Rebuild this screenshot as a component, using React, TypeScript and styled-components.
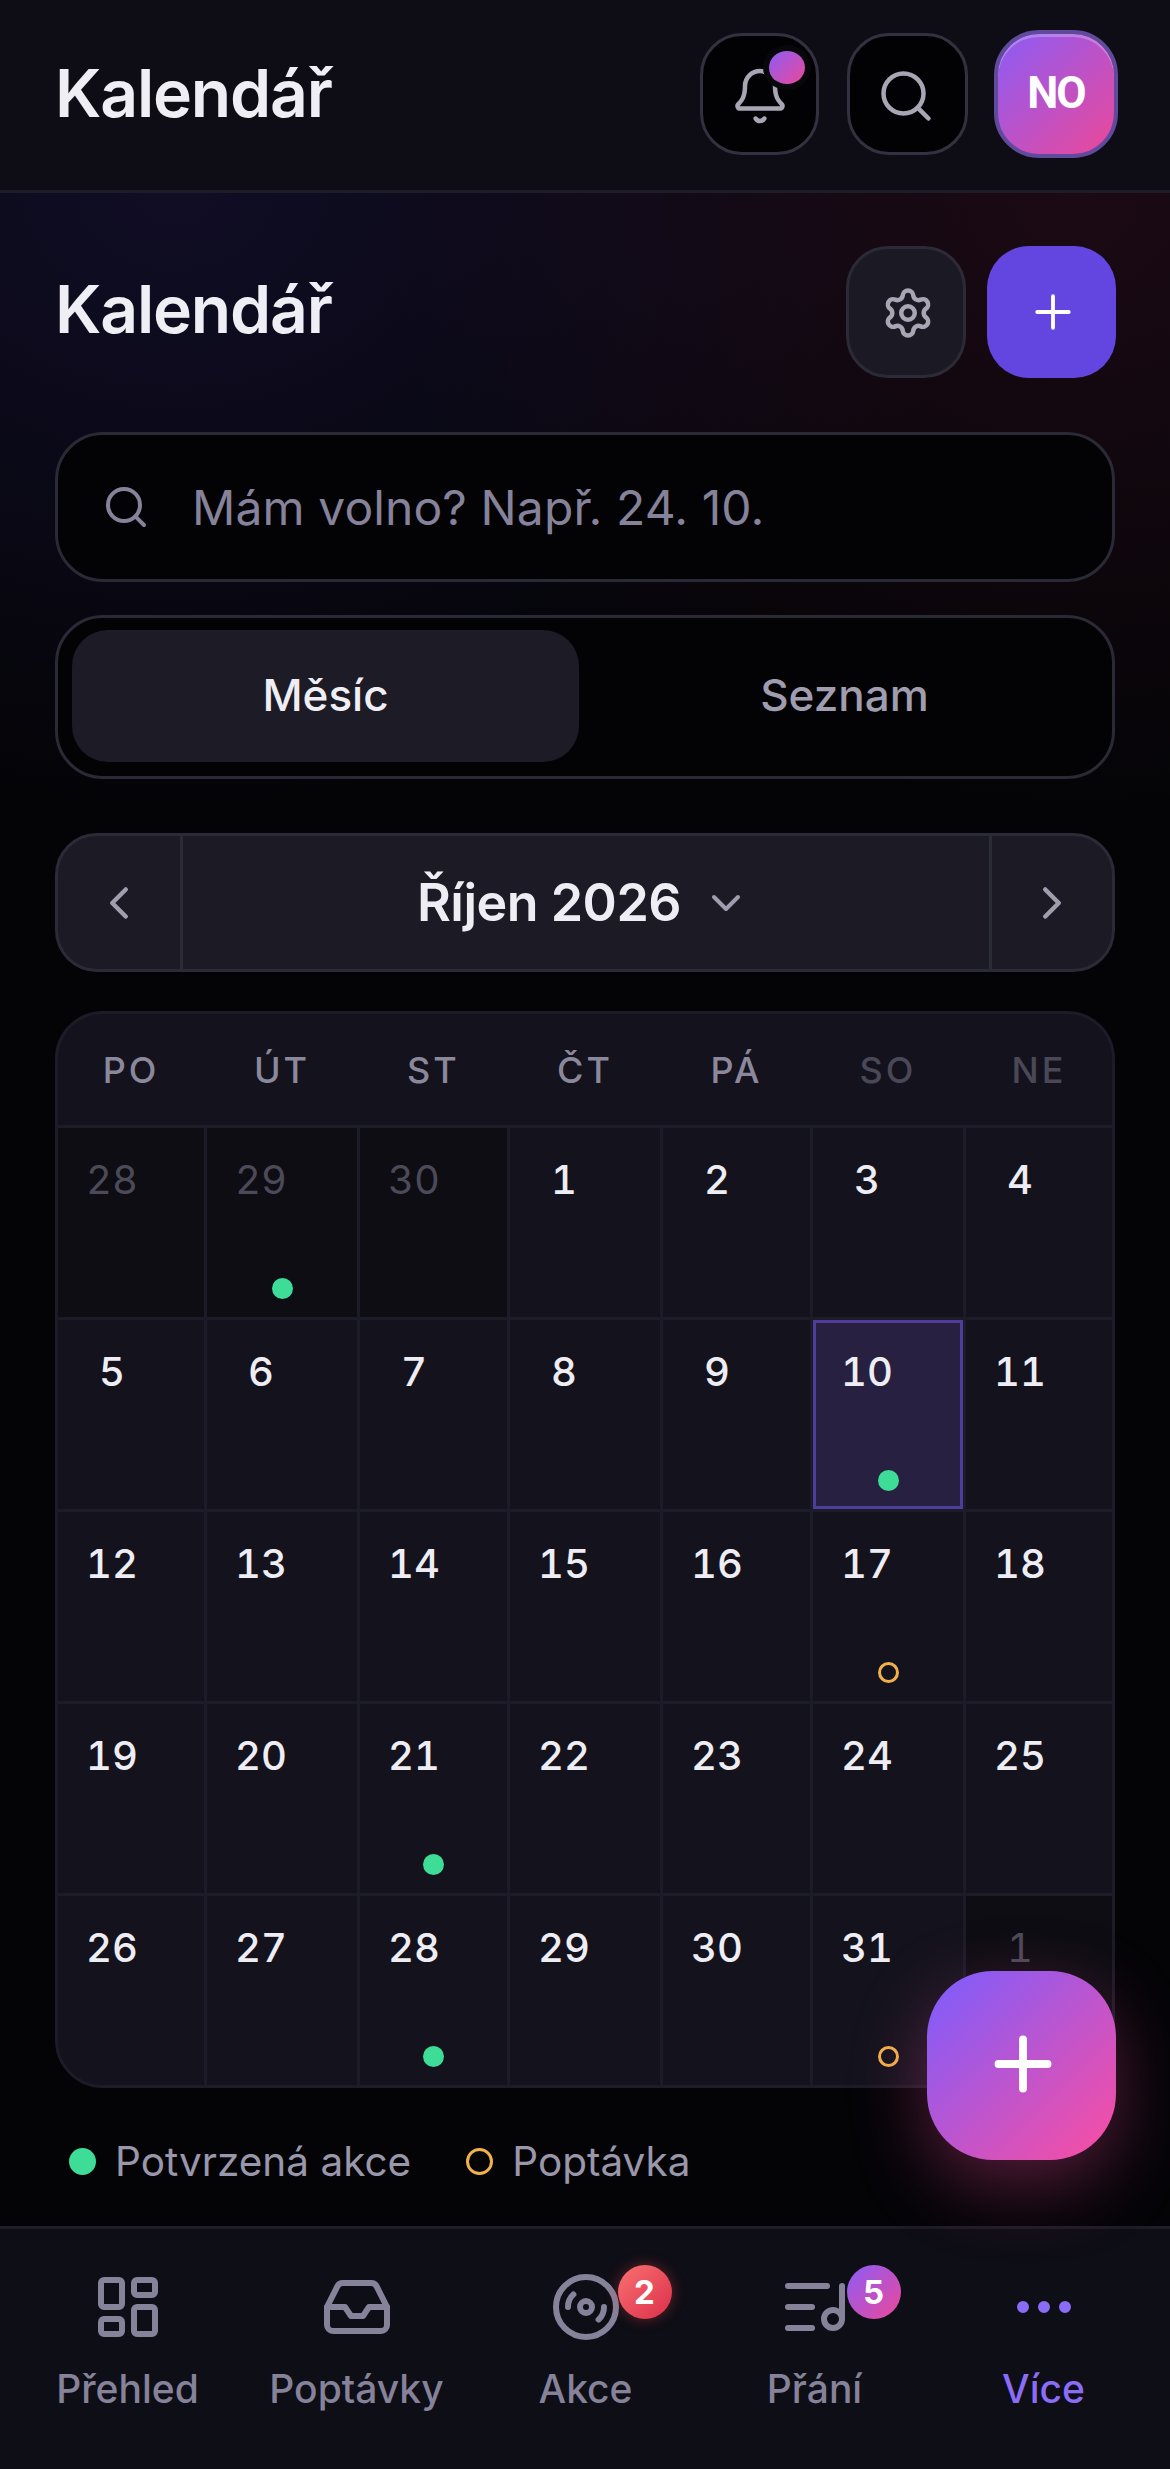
import React from "react";
import styled, { createGlobalStyle } from "styled-components";
import { Bell, Search, Settings, Plus, ChevronLeft, ChevronRight, ChevronDown, LayoutDashboard, Inbox, Disc3, ListMusic, Ellipsis } from "lucide-react";

const Global = createGlobalStyle`
  html, body { margin: 0; padding: 0; background: #040407; }
  * { box-sizing: border-box; }
  body { font-family: Inter, "Noto Sans", sans-serif; color: #eeedf3; }
`;

const Page = styled.div`
  position: relative;
  width: 1170px;
  height: 2469px;
  display: flex;
  flex-direction: column;
  overflow: hidden;
  background: #040407;
`;

const TopBar = styled.header`
  height: 193px;
  flex: none;
  display: flex;
  align-items: center;
  padding: 0 52px 2px 55px;
  background: #0e0d15;
  border-bottom: 3px solid #1d1c28;
`;

const Heading = styled.h1`
  margin: 0 0 2px;
  flex: 1;
  font-size: 66px;
  line-height: 78px;
  font-weight: 600;
  letter-spacing: -1.2px;
  color: #efeef4;
`;

const TopActions = styled.div`
  display: flex;
  align-items: center;
  gap: 26px;
`;

const IconButton = styled.button`
  position: relative;
  width: 121px;
  height: 122px;
  padding: 4px 3px 0 0;
  display: flex;
  align-items: center;
  justify-content: center;
  border-radius: 42px;
  border: 3px solid #33313f;
  background: #020204;
  color: #a8a6b5;
`;

const BellButton = styled(IconButton)`
  width: 119px;
  margin-right: 2px;
  padding-right: 0;
`;

const NotifyDot = styled.span`
  position: absolute;
  top: 15px;
  right: 11px;
  width: 36px;
  height: 33px;
  border-radius: 50%;
  background: linear-gradient(135deg, #8b5cf6, #ec4899);
  box-shadow: 0 0 0 6px #08080c;
`;

const Avatar = styled.div`
  width: 124px;
  height: 128px;
  display: flex;
  align-items: center;
  justify-content: center;
  padding-bottom: 3px;
  border-radius: 45px;
  border: 4px solid #5f4a9c;
  background: linear-gradient(135deg, #8b5cf6, #ec4899);
  box-shadow: inset 0 3px 0 rgba(255, 255, 255, 0.25);
  font-family: Roboto, Inter, sans-serif;
  font-size: 44px;
  font-weight: 700;
  letter-spacing: -2px;
  color: #fff;
`;

const Main = styled.main`
  flex: 1;
  padding: 53px 55px 0;
  display: flex;
  flex-direction: column;
  background:
    radial-gradient(ellipse 800px 620px at 15% 0, rgba(90, 70, 220, 0.14), transparent 100%),
    radial-gradient(ellipse 700px 620px at 92% 0, rgba(236, 60, 130, 0.1), transparent 100%),
    #040407;
`;

const TitleRow = styled.div`
  display: flex;
  align-items: center;
  height: 132px;
  padding-bottom: 4px;
`;

const SectionActions = styled.div`
  display: flex;
  gap: 21px;
  margin-right: -1px;
  margin-bottom: -4px;
`;

const GearButton = styled(IconButton)`
  width: 120px;
  height: 132px;
  padding: 2px 0 0 3px;
  background: #1b1a24;
  border-color: #2b2a36;
`;

const AddButton = styled.button`
  width: 129px;
  height: 132px;
  padding: 0 0 0 3px;
  display: flex;
  align-items: center;
  justify-content: center;
  border: none;
  border-radius: 42px;
  background: #6345e0;
  color: #fff;
`;

const SearchField = styled.div`
  margin-top: 54px;
  height: 150px;
  display: flex;
  align-items: center;
  gap: 42px;
  padding: 0 0 0 44px;
  border-radius: 48px;
  border: 3px solid #2a2936;
  background: #030306;
  color: #85829a;
  font-size: 48px;
  letter-spacing: 0.1px;
`;

const Tabs = styled.div`
  margin-top: 33px;
  height: 164px;
  display: grid;
  grid-template-columns: 1fr 1fr;
  gap: 12px;
  padding: 12px 14px 14px;
  border-radius: 48px;
  border: 3px solid #2a2936;
  background: #030306;
`;

const Tab = styled.div<{ $active?: boolean }>`
  display: flex;
  align-items: center;
  justify-content: center;
  padding-bottom: 3px;
  border-radius: 36px;
  font-size: 44px;
  font-weight: 500;
  color: ${(p) => (p.$active ? "#efeef4" : "#a09dae")};
  background: ${(p) => (p.$active ? "#1c1b26" : "transparent")};
`;

const MonthNav = styled.div`
  margin-top: 54px;
  height: 139px;
  display: flex;
  border-radius: 42px;
  border: 3px solid #2b2a37;
  background: #1b1a25;
  overflow: hidden;
`;

const NavArrow = styled.div<{ $width: number }>`
  flex: none;
  width: ${(p) => p.$width}px;
  display: flex;
  align-items: center;
  justify-content: center;
  color: #a09dae;
`;

const MonthTitle = styled.div`
  flex: 1;
  display: flex;
  align-items: center;
  justify-content: center;
  gap: 21px;
  padding-right: 5px;
  border-left: 3px solid #2b2a37;
  border-right: 3px solid #2b2a37;
  font-size: 52px;
  font-weight: 600;
  letter-spacing: -0.5px;
  color: #eeedf3;
  svg { color: #a09dae; }
`;

const Calendar = styled.section`
  margin-top: 39px;
  border-radius: 48px;
  border: 3px solid #1c1b28;
  background: #1c1b28;
  overflow: hidden;
`;

const Columns = `146px 150px 147px 150px 147px 150px 146px`;

const WeekHead = styled.div`
  display: grid;
  grid-template-columns: ${Columns};
  gap: 3px;
  height: 111px;
  margin-bottom: 3px;
  background: #14131d;
`;

const WeekDay = styled.div<{ $dim?: boolean }>`
  display: flex;
  align-items: center;
  justify-content: center;
  font-size: 36px;
  font-weight: 500;
  letter-spacing: 3px;
  color: ${(p) => (p.$dim ? "#4a4857" : "#8b889c")};
`;

const Days = styled.div`
  display: grid;
  grid-template-columns: ${Columns};
  grid-auto-rows: 189px;
  gap: 3px;
`;

const Cell = styled.div<{ $other?: boolean; $today?: boolean }>`
  display: flex;
  flex-direction: column;
  align-items: flex-start;
  padding: 28px 0 18px 18px;
  background: ${(p) => (p.$today ? "#272040" : p.$other ? "#0d0d13" : "#14131d")};
  box-shadow: ${(p) => (p.$today ? "inset 0 0 0 3px #4f3d9e" : "none")};
`;

const DayNumber = styled.span<{ $other?: boolean }>`
  width: 72px;
  text-align: center;
  font-size: 40px;
  line-height: 48px;
  font-weight: ${(p) => (p.$other ? 400 : 500)};
  font-variant-numeric: tabular-nums;
  color: ${(p) => (p.$other ? "#4c4a58" : "#eeedf3")};
`;

const Marker = styled.span<{ $hollow?: boolean }>`
  display: block;
  flex: none;
  width: 21px;
  height: 21px;
  border-radius: 50%;
  background: ${(p) => (p.$hollow ? "transparent" : "#3ddc97")};
  border: ${(p) => (p.$hollow ? "3px solid #f0b04a" : "none")};
`;

const CellMarker = styled(Marker)`
  margin-top: auto;
  align-self: center;
  transform: translateX(-9px);
`;

const Legend = styled.div`
  margin-top: 49px;
  padding-left: 14px;
  height: 48px;
  display: flex;
  align-items: center;
  font-size: 40.5px;
  color: #9a97ab;
`;

const LegendDot = styled(Marker)`
  width: 27px;
  height: 27px;
  margin-right: 19px;
  border-width: 3.5px;
`;

const LegendLabel = styled.span`
  margin-right: 55px;
`;

const BottomNav = styled.nav`
  flex: none;
  height: 243px;
  display: grid;
  grid-template-columns: repeat(5, 1fr);
  padding: 42px 12px 0 13px;
  background: #0e0e16;
  border-top: 3px solid #1d1c28;
`;

const NavItem = styled.div<{ $active?: boolean }>`
  display: flex;
  flex-direction: column;
  align-items: center;
  gap: 22px;
  font-size: 39px;
  line-height: 48px;
  font-weight: 500;
  color: ${(p) => (p.$active ? "#8b6cf6" : "#85829a")};
`;

const NavIcon = styled.div`
  position: relative;
  width: 72px;
  height: 72px;
`;

const Badge = styled.span<{ $tone: "red" | "violet" }>`
  position: absolute;
  top: -6px;
  left: 68px;
  width: 54px;
  height: 54px;
  display: flex;
  align-items: center;
  justify-content: center;
  border-radius: 50%;
  font-size: 33px;
  font-weight: 700;
  color: #fff;
  background: ${(p) =>
    p.$tone === "red"
      ? "linear-gradient(135deg, #f87171, #dc2f4a)"
      : "linear-gradient(135deg, #8b5cf6, #ec4899)"};
  box-shadow: ${(p) => (p.$tone === "red" ? "0 0 14px rgba(239,68,68,.4)" : "none")};
`;

const Fab = styled.button`
  position: absolute;
  right: 54px;
  bottom: 309px;
  width: 189px;
  height: 189px;
  padding: 0 0 3px 3px;
  display: flex;
  align-items: center;
  justify-content: center;
  border: none;
  border-radius: 66px;
  background: linear-gradient(135deg, #855cf8 8%, #f64ea4 95%);
  box-shadow: 0 24px 72px rgba(236, 72, 153, 0.35);
  color: #fff;
`;

type Day = { n: number; other?: boolean; today?: boolean; mark?: "solid" | "hollow" };

const days: Day[] = [
  { n: 28, other: true },
  { n: 29, other: true, mark: "solid" },
  { n: 30, other: true },
  ...Array.from({ length: 31 }, (_, i): Day => {
    const n = i + 1;
    if (n === 10) return { n, today: true, mark: "solid" };
    if (n === 21 || n === 28) return { n, mark: "solid" };
    if (n === 17 || n === 31) return { n, mark: "hollow" };
    return { n };
  }),
  { n: 1, other: true },
];

const week = ["PO", "ÚT", "ST", "ČT", "PÁ", "SO", "NE"];

export default function App() {
  return (
    <Page>
      <Global />
      <TopBar>
        <Heading>Kalendář</Heading>
        <TopActions>
          <BellButton>
            <Bell size={60} strokeWidth={1.8} />
            <NotifyDot />
          </BellButton>
          <IconButton>
            <Search size={60} strokeWidth={1.8} />
          </IconButton>
          <Avatar>NO</Avatar>
        </TopActions>
      </TopBar>
      <Main>
        <TitleRow>
          <Heading>Kalendář</Heading>
          <SectionActions>
            <GearButton>
              <Settings size={54} strokeWidth={2} />
            </GearButton>
            <AddButton>
              <Plus size={54} strokeWidth={1.7} />
            </AddButton>
          </SectionActions>
        </TitleRow>
        <SearchField>
          <Search size={48} strokeWidth={2} />
          Mám volno? Např. 24. 10.
        </SearchField>
        <Tabs>
          <Tab $active>Měsíc</Tab>
          <Tab>Seznam</Tab>
        </Tabs>
        <MonthNav>
          <NavArrow $width={122}>
            <ChevronLeft size={54} strokeWidth={2} />
          </NavArrow>
          <MonthTitle>
            Říjen 2026
            <ChevronDown size={48} strokeWidth={2} />
          </MonthTitle>
          <NavArrow $width={120}>
            <ChevronRight size={54} strokeWidth={2} />
          </NavArrow>
        </MonthNav>
        <Calendar>
          <WeekHead>
            {week.map((d, i) => (
              <WeekDay key={d} $dim={i > 4}>{d}</WeekDay>
            ))}
          </WeekHead>
          <Days>
            {days.map((d, i) => (
              <Cell key={i} $other={d.other} $today={d.today}>
                <DayNumber $other={d.other}>{d.n}</DayNumber>
                {d.mark && <CellMarker $hollow={d.mark === "hollow"} />}
              </Cell>
            ))}
          </Days>
        </Calendar>
        <Legend>
          <LegendDot />
          <LegendLabel>Potvrzená akce</LegendLabel>
          <LegendDot $hollow />
          <LegendLabel>Poptávka</LegendLabel>
        </Legend>
      </Main>
      <BottomNav>
        <NavItem>
          <NavIcon><LayoutDashboard size={72} strokeWidth={2} /></NavIcon>
          Přehled
        </NavItem>
        <NavItem>
          <NavIcon><Inbox size={72} strokeWidth={2} /></NavIcon>
          Poptávky
        </NavItem>
        <NavItem>
          <NavIcon>
            <Disc3 size={72} strokeWidth={2} />
            <Badge $tone="red">2</Badge>
          </NavIcon>
          Akce
        </NavItem>
        <NavItem>
          <NavIcon>
            <ListMusic size={72} strokeWidth={2} />
            <Badge $tone="violet">5</Badge>
          </NavIcon>
          Přání
        </NavItem>
        <NavItem $active>
          <NavIcon><Ellipsis size={72} strokeWidth={2} /></NavIcon>
          Více
        </NavItem>
      </BottomNav>
      <Fab>
        <Plus size={84} strokeWidth={2.25} />
      </Fab>
    </Page>
  );
}
